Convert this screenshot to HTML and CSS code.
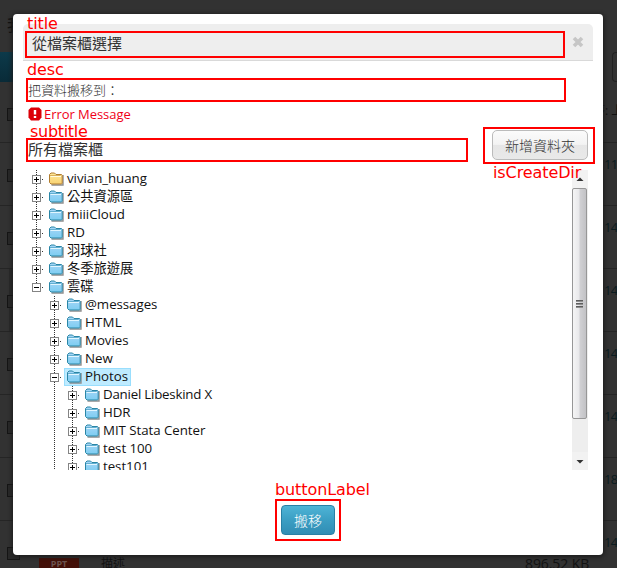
FILE: index.html
```html
<!DOCTYPE html>
<html lang="zh-Hant">
<head>
<meta charset="utf-8">
<title>從檔案櫃選擇</title>
<link rel="stylesheet" href="styles.css">
</head>
<body>
<svg class="defs" width="0" height="0">
  <defs>
    <linearGradient id="gb" x1="0" y1="0" x2="0" y2="1"><stop offset="0" stop-color="#a6d6f8"/><stop offset="1" stop-color="#7dcdf1"/></linearGradient>
    <linearGradient id="gy" x1="0" y1="0" x2="0" y2="1"><stop offset="0" stop-color="#ffe999"/><stop offset="1" stop-color="#f8d272"/></linearGradient>
    <symbol id="blue" viewBox="0 0 16 14">
      <path d="M2.5 13H14V3" fill="none" stroke="#8d8d8d" stroke-width="1.4"/>
      <path d="M.5 10.5V2.5L2 1H5.5L7 2.5H12.5L13.2 3.2V11.2L12.5 12H2Z" fill="url(#gb)" stroke="#2a86a6"/>
      <path d="M1.5 4.5H12" stroke="#e2f6ff"/>
      <path d="M1 3.5H11.5" stroke="#4b9fc0" stroke-width=".7"/>
    </symbol>
    <symbol id="yellow" viewBox="0 0 16 14">
      <path d="M2.5 13H14V3" fill="none" stroke="#8d8d8d" stroke-width="1.4"/>
      <path d="M.5 10.5V2.5L2 1H5.5L7 2.5H12.5L13.2 3.2V11.2L12.5 12H2Z" fill="url(#gy)" stroke="#b07c30"/>
      <path d="M1.5 4.5H12" stroke="#fffbe0"/>
      <path d="M1 3.5H11.5" stroke="#c99a45" stroke-width=".7"/>
    </symbol>
  </defs>
</svg>
<div class="page">
  <div class="top"><span>我</span></div>
  <div class="toolbar"><i class="tool-a"></i><i class="tool-b"></i></div>
  <div class="row first"><i class="check"></i><span class="sort">序: 上</span></div>
  <div class="row"><i class="check"></i><span class="num">11</span></div>
  <div class="row"><i class="check"></i><span class="num">14</span></div>
  <div class="row active"><i class="check"></i><span class="num">14</span></div>
  <div class="row"><i class="check"></i><span class="num">14</span></div>
  <div class="row"><i class="check"></i><span class="num">14</span></div>
  <div class="row"><i class="check"></i><span class="num">18</span></div>
  <div class="row last"><i class="check"></i><span class="num">14</span></div>
  <div class="file"><b>PPT</b><span class="about">描述</span><span class="size">896.52 KB</span></div>
</div>

<div class="modal">
  <div class="head"><h1>從檔案櫃選擇</h1>
    <svg class="close" width="12" height="12" viewBox="0 0 12 12"><path d="M2 2L10 10M10 2L2 10" stroke="#c6c6c6" stroke-width="3.6"/></svg>
  </div>
  <p class="desc">把資料搬移到：</p>
  <div class="error">
    <svg width="14" height="14" viewBox="0 0 14 14"><path d="M3 .5H11L13.5 3V10.5L11 13.5H3L.5 10.5V3Z" fill="#dc0008"/><path d="M7 3V7.5M7 9V11" stroke="#fff" stroke-width="2.4"/></svg>
    <span>Error Message</span>
  </div>
  <div class="sub"><h2>所有檔案櫃</h2><button class="create">新增資料夾</button></div>
  <div class="browser">
    <ul class="tree">
      <li><i class="box plus"></i><span class="node"><svg><use href="#yellow"/></svg>vivian_huang</span></li>
      <li><i class="box plus"></i><span class="node"><svg><use href="#blue"/></svg>公共資源區</span></li>
      <li><i class="box plus"></i><span class="node"><svg><use href="#blue"/></svg>miiiCloud</span></li>
      <li><i class="box plus"></i><span class="node"><svg><use href="#blue"/></svg>RD</span></li>
      <li><i class="box plus"></i><span class="node"><svg><use href="#blue"/></svg>羽球社</span></li>
      <li><i class="box plus"></i><span class="node"><svg><use href="#blue"/></svg>冬季旅遊展</span></li>
      <li class="end"><i class="box"></i><span class="node"><svg><use href="#blue"/></svg>雲碟</span>
        <ul>
          <li><i class="box plus"></i><span class="node"><svg><use href="#blue"/></svg>@messages</span></li>
          <li><i class="box plus"></i><span class="node wide"><svg><use href="#blue"/></svg>HTML</span></li>
          <li><i class="box plus"></i><span class="node"><svg><use href="#blue"/></svg>Movies</span></li>
          <li><i class="box plus"></i><span class="node"><svg><use href="#blue"/></svg>New</span></li>
          <li><i class="box"></i><span class="node selected"><svg><use href="#blue"/></svg>Photos</span>
            <ul>
              <li><i class="box plus"></i><span class="node tight"><svg><use href="#blue"/></svg>Daniel Libeskind X</span></li>
              <li><i class="box plus"></i><span class="node"><svg><use href="#blue"/></svg>HDR</span></li>
              <li><i class="box plus"></i><span class="node"><svg><use href="#blue"/></svg>MIT Stata Center</span></li>
              <li><i class="box plus"></i><span class="node"><svg><use href="#blue"/></svg>test 100</span></li>
              <li><i class="box plus"></i><span class="node"><svg><use href="#blue"/></svg>test101</span></li>
            </ul>
          </li>
        </ul>
      </li>
    </ul>
    <div class="scroll">
      <svg class="arrow" width="16" height="18" viewBox="0 0 16 18"><path d="M4.5 11L8 7.5L11.5 11Z" fill="#333"/></svg>
      <div class="thumb"><i></i><i></i><i></i></div>
      <svg class="arrow" width="16" height="18" viewBox="0 0 16 18"><path d="M4.5 8L8 11.5L11.5 8Z" fill="#333"/></svg>
    </div>
  </div>
  <div class="foot"><button class="move">搬移</button></div>
</div>

<div class="mark m-title"><span>title</span></div>
<div class="mark m-desc"><span>desc</span></div>
<div class="mark m-sub"><span>subtitle</span></div>
<div class="mark m-create"><span>isCreateDir</span></div>
<div class="mark m-button"><span>buttonLabel</span></div>
</body>
</html>
```

FILE: styles.css
```css
* { box-sizing: border-box; }
body {
  margin: 0;
  width: 617px;
  height: 568px;
  position: relative;
  overflow: hidden;
  background: #323232;
  font-family: "Open Sans", "Noto Sans CJK TC", sans-serif;
}
.defs { position: absolute; }
h1, h2, p, ul { margin: 0; padding: 0; font-weight: normal; list-style: none; }

/* dimmed page behind the dialog */
.page { height: 568px; color: #111; }
.top { height: 52px; padding: 14px 0 0 7px; font-size: 16px; line-height: 22px; }
.toolbar { height: 30px; display: flex; justify-content: space-between; }
.tool-a { width: 40px; background: linear-gradient(#0c3a4a, #092b38); }
.tool-b { width: 5px; border: 1px solid #222; border-right: 0; border-radius: 4px 0 0 4px; }
.row {
  height: 63px;
  padding: 0 0 0 7px;
  display: flex;
  justify-content: space-between;
  align-items: flex-start;
  border-bottom: 1px solid #252525;
}
.row.first { height: 61px; }
.row.last { border: 0; height: 36px; }
.row.active { background: linear-gradient(90deg, transparent 9px, #2a2a2a 9px 13px, transparent 13px); }
.check { width: 13px; height: 13px; margin-top: 26px; border: 1px solid #151515; background: #292929; }
.num { width: 13px; margin-top: 12px; font-size: 13px; letter-spacing: -.8px; line-height: 18px; color: #0b1c20; white-space: nowrap; }
.sort { width: 24px; margin-top: 19px; font-size: 12px; line-height: 20px; white-space: nowrap; }
.file { display: flex; height: 12px; padding-left: 39px; align-items: flex-start; font-size: 14px; line-height: 14px; }
.file b { width: 40px; height: 12px; margin-top: 1px; background: #431008; color: #6d544f; font-size: 9px; line-height: 12px; text-align: center; }
.file .about { margin-left: 22px; font-size: 12px; }
.file .size { margin-left: 400px; letter-spacing: -.1px; white-space: nowrap; }

.modal {
  position: absolute;
  left: 13px;
  top: 14px;
  width: 590px;
  height: 541px;
  padding: 10px 10px 0;
  background: #fff;
  border-radius: 4px;
  box-shadow: 0 1px 4px 1px #1c1c1c;
  color: #333;
}
.head {
  display: flex;
  justify-content: space-between;
  align-items: center;
  height: 37px;
  padding: 0 9px;
  background: #eee;
  border-bottom: 1px solid #d9d9d9;
  border-radius: 5px 5px 0 0;
}
.head h1 { font-size: 15px; line-height: 20px; padding-top: 2px; }
.desc { margin: 19px 0 0 5px; font-size: 13px; line-height: 20px; height: 20px; color: #333; font-weight: 300; }
.error { display: flex; align-items: center; gap: 2px; height: 20px; margin: 4px 0 0 5px; color: #f00018; font-size: 13px; }
.error span { letter-spacing: -.05px; }
.sub { display: flex; justify-content: space-between; height: 46px; padding: 6px 5px 0; }
.sub h2 { font-size: 15px; line-height: 20px; padding-top: 9px; }
.create {
  width: 96px;
  height: 30px;
  padding: 0;
  border: 1px solid #bbb;
  border-radius: 5px;
  background: linear-gradient(#fbfbfb, #f3f3f3 48%, #e6e6e6 50%, #e9e9e9);
  color: #333;
  font: 300 14px/26px "Noto Sans CJK TC", sans-serif;
}
.browser { display: flex; justify-content: space-between; height: 300px; margin: 0 5px; }
.tree { width: 500px; height: 300px; overflow: hidden; color: #111; font-size: 13.3px; letter-spacing: -.05px; }
.tree ul { margin-left: 18px; }
.tree li { background: repeating-linear-gradient(#333 0 1px, transparent 1px 2px) 8px 0 / 1px 100% no-repeat; }
.tree li.end { background-size: 1px 9px; }
.node, .box { vertical-align: top; }
.box {
  display: inline-block;
  width: 9px;
  height: 9px;
  margin: 5px 5px 4px 4px;
  border: 1px solid #848484;
  background: linear-gradient(#000, #000) center / 5px 1px no-repeat #fff;
}
.box::after { content: ""; display: block; width: 1px; height: 1px; margin: 3px 0 0 9px; background: #333; }
.plus { background: linear-gradient(#000, #000) center / 5px 1px no-repeat, linear-gradient(#000, #000) center / 1px 5px no-repeat #fff; }
.node {
  display: inline-flex;
  align-items: center;
  height: 18px;
  line-height: 16px;
  padding: 0 3px 2px;
  white-space: pre;
}
.node svg { width: 16px; height: 14px; margin: 1px 2px 0 0; flex: none; }
.tight { letter-spacing: -.22px; }
.wide { letter-spacing: .2px; }
.selected { background: #beebff; box-shadow: inset 0 0 0 1px #99defd; }
.scroll { display: flex; flex-direction: column; width: 16px; height: 300px; background: #eee; }
.arrow { flex: none; background: #f2f2f2; }
.thumb {
  display: flex;
  flex-direction: column;
  align-items: center;
  justify-content: center;
  gap: 1px;
  width: 15px;
  height: 231px;
  margin-bottom: auto;
  border: 1px solid #979797;
  border-radius: 2px;
  background: linear-gradient(90deg, #f5f5f5, #e9e9eb 45%, #d0d0d3 55%, #c2c2c5);
}
.thumb i { width: 7px; height: 2px; background: linear-gradient(#444, #aaa); }
.foot { display: flex; justify-content: center; padding-top: 35px; }
.move {
  width: 54px;
  height: 30px;
  padding: 0;
  border: 1px solid #2980a5;
  border-radius: 4px;
  background: linear-gradient(#4eb4d6, #3b9ec3 50%, #318db4);
  color: #fff;
  font: 300 14px/26px "Noto Sans CJK TC", sans-serif;
}

/* annotation frames drawn over the dialog */
.mark { position: absolute; border: 2px solid #f00; color: #f00; font: 16px/18px "DejaVu Sans", sans-serif; letter-spacing: -.1px; }
.mark span { position: absolute; white-space: nowrap; }
.m-title { left: 25px; top: 31px; width: 540px; height: 27px; }
.m-title span { left: 0; top: -18px; }
.m-desc { left: 26px; top: 78px; width: 540px; height: 24px; }
.m-desc span { left: -1px; top: -19px; }
.m-sub { left: 26px; top: 138px; width: 442px; height: 24px; }
.m-sub span { left: 2px; top: -17px; letter-spacing: -.3px; }
.m-create { left: 483px; top: 127px; width: 112px; height: 37px; }
.m-create span { left: 8px; top: 35px; }
.m-button { left: 275px; top: 499px; width: 66px; height: 42px; }
.m-button span { left: -2px; top: -20px; }
```
